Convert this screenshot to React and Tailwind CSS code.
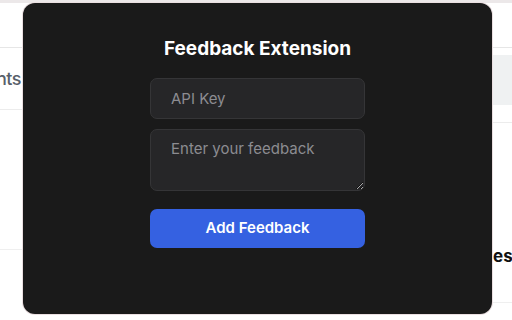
import React from "react";

function App() {
  return (
    <div className="relative w-[512px] h-[320px] overflow-hidden bg-white" style={{ fontFamily: "Inter, 'Noto Sans', sans-serif" }}>
      {/* page underneath */}
      <div className="h-[3px] bg-[#ece8e9]"></div>
      <div className="flex justify-between h-[317px]">
        <div className="w-[23px] flex flex-col">
          <div className="h-[45px] border-b border-[#e6e6e6]"></div>
          <div className="h-[62px] border-b border-[#ececec] flex items-center justify-end pr-[2px] overflow-hidden">
            <span className="text-[18px] font-medium text-[#58606a] whitespace-nowrap tracking-[-0.5px]">nts</span>
          </div>
          <div className="h-[140px] border-b border-[#efefef]"></div>
        </div>
        <div className="w-[20px] flex flex-col">
          <div className="h-[45px] border-b border-[#e6e6e6]"></div>
          <div className="h-[7px]"></div>
          <div className="h-[50px] bg-[#eff1f2]"></div>
          <div className="h-[18px] border-b border-[#ececec]"></div>
          <div className="h-[126px]"></div>
          <div className="h-[16px] flex items-center overflow-hidden pl-[1px]">
            <span className="text-[17px] font-bold text-[#111] whitespace-nowrap">es</span>
          </div>
          <div className="h-[38px] border-b border-[#efefef]"></div>
        </div>
      </div>

      {/* extension popup */}
      <div className="absolute left-[23px] top-[3px] w-[469px] h-[311px] rounded-[12px] bg-[#1a1a1a] shadow-[0_0_0_1px_#eadfe1] flex flex-col items-center pt-[34px]">
        <h1 className="text-[19px] leading-[24px] font-bold text-white">Feedback Extension</h1>
        <div className="w-[215px] mt-[17px] flex flex-col">
          <input
            type="text"
            placeholder="API Key"
            className="h-[41px] w-full rounded-[7px] bg-[#262628] border border-[#353537] px-[20px] text-[15px] text-white placeholder:text-[#8c8c91] outline-none"
          />
          <textarea
            placeholder="Enter your feedback"
            className="mt-[10px] h-[62px] w-full rounded-[7px] bg-[#262628] border border-[#353537] px-[20px] pt-[9px] text-[15px] leading-[20px] text-white placeholder:text-[#8c8c91] outline-none"
          ></textarea>
          <button className="mt-[18px] h-[39px] w-full rounded-[7px] bg-[#3561e1] text-white text-[15px] font-semibold">
            Add Feedback
          </button>
        </div>
      </div>
    </div>
  );
}

export default App;
